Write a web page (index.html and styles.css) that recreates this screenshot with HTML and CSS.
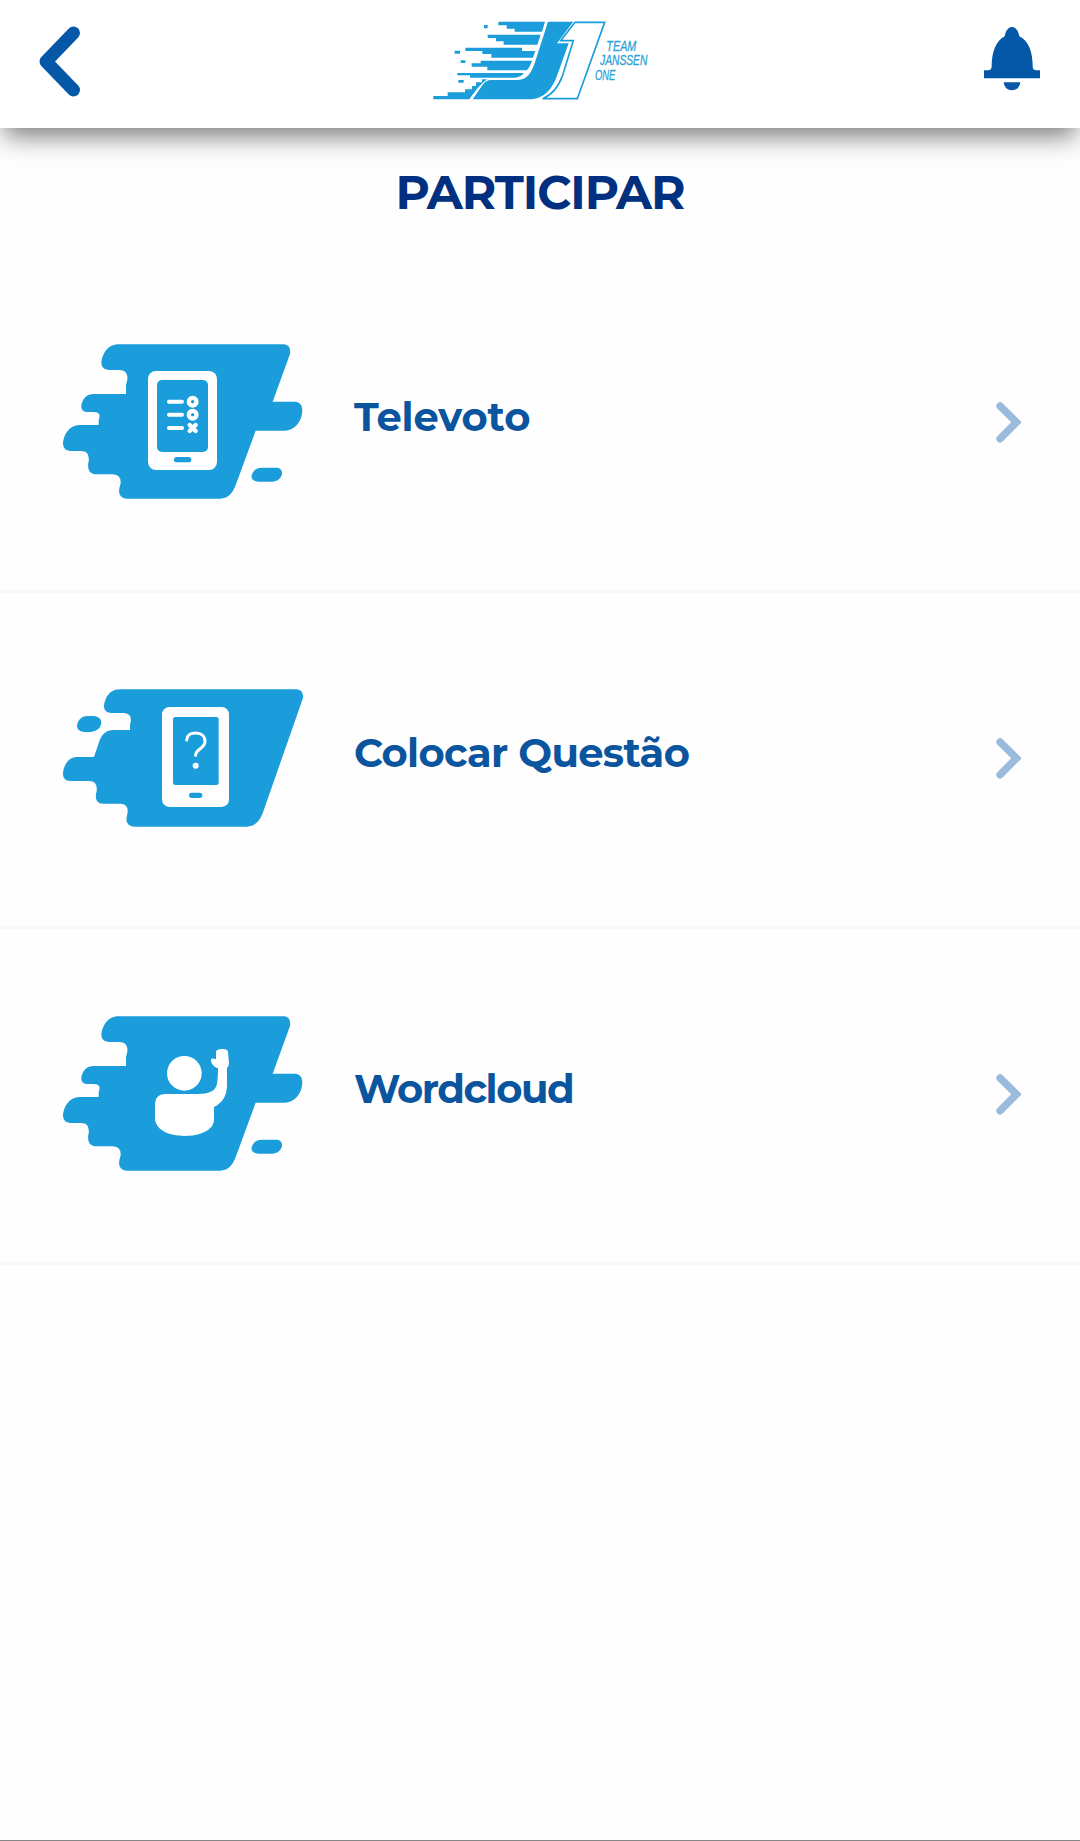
FILE: index.html
```html
<!DOCTYPE html>
<html lang="pt">
<head>
    <meta charset="UTF-8">
    <meta name="viewport" content="width=device-width, initial-scale=1.0">
    <title>Participar</title>
    <link rel="stylesheet" href="styles.css">
</head>
<body>
    <svg class="defs" aria-hidden="true">
        <symbol id="splash" viewBox="0 0 810 540">
            <path d="M205 43 H702 Q724 45 720 72 L668 215 H738 Q758 219 757 244 C755 276 733 302 705 302 H617 L557 466 C547 492 532 506 510 506 H232 C212 506 205 493 208 475 L212 460 Q214 434 186 433 H137 C117 432 111 416 116 394 Q120 363 93 363 H62 C42 362 35 346 41 327 C48 302 65 285 90 285 H146 V269 Q156 246 130 246 H111 C95 245 91 232 96 218 C102 201 113 192 132 192 H228 V164 C238 137 230 120 208 120 H178 C155 119 150 102 157 82 C166 58 181 43 205 43 Z"/>
            <path d="M635 413 H680 Q697 415 696 431 C693 447 679 455 662 455 H625 Q602 453 605 436 C609 422 619 413 635 413 Z"/>
        </symbol>
        <symbol id="chevron" viewBox="0 0 25 41">
            <path d="M4 4 L20.5 20.2 L4 36.8" fill="none" stroke="currentColor" stroke-width="7.4" stroke-linecap="round"/>
        </symbol>
    </svg>

    <header class="topbar">
        <a class="back" href="#" aria-label="Voltar">
            <svg width="42" height="72" viewBox="0 0 42 72">
                <path d="M34.5 7 L7 35.5 L34.5 64" />
            </svg>
        </a>
        <svg class="logo" width="240" height="120" viewBox="0 0 720 360">
            <path d="M235 65 H375 L366 95 H284 V86 H260 V76 H235 Z"/>
            <path d="M203 104 H362 L352 134 H251 V124 H228 V114 H203 Z"/>
            <path d="M136 143 H306 V153 H346 L339 173 H214 V162 H187 V153 H136 Z"/>
            <path d="M182 182 H336 C332 195 327 204 320 211 H202 V200 H155 V190 H182 Z"/>
            <path d="M112 219 H312 C304 229 294 233 280 233 H150 V226 H112 Z"/>
            <path d="M186 238 H202 C184 249 171 267 148 298 H40 V288 H83 V277 H135 V268 H156 V258 H168 V247 H186 Z"/>
            <path d="M192 75h11v10h-11z M104 152h16v9h-16z M122 181h14v8h-14z M115 240h16v8h-16z"/>
            <path d="M384 65 H460 L411 130 H446 L414 219 C399 264 375 298 326 298 H158 L186 257 Q195 240 215 240 H294 C322 239 334 218 344 190 Z"/>
            <path class="outline" d="M465 67 H554 L472 296 H368 C398 284 416 260 428 226 L460 122 H422 Z"/>
            <g class="logo-text">
                <text x="559" y="152" textLength="90" lengthAdjust="spacingAndGlyphs">TEAM</text>
                <text x="540" y="196" textLength="142" lengthAdjust="spacingAndGlyphs">JANSSEN</text>
                <text x="525" y="241" textLength="61" lengthAdjust="spacingAndGlyphs">ONE</text>
            </g>
        </svg>
        <a class="bell" href="#" aria-label="Notificações">
            <svg width="56" height="64" viewBox="0 0 168 192">
                <path d="M62 28 C66 8 74 0 84 0 C94 0 102 8 106 28 C134 40 146 77 146 118 Q146 130 157 130 H168 V154 H0 V130 H12 Q23 130 23 118 C23 77 36 40 62 28 Z"/>
                <path d="M59 166 H109 C107 181 98 190 84 190 C70 190 61 181 59 166 Z"/>
            </svg>
        </a>
    </header>

    <main>
        <h1>PARTICIPAR</h1>
        <nav class="menu">
            <a class="item" href="#">
                <svg class="picture" viewBox="0 0 810 561">
                    <use href="#splash" width="810" height="540"/>
                    <rect class="white" x="294" y="123" width="207" height="297" rx="24"/>
                    <rect x="321" y="150" width="153" height="216" rx="15"/>
                    <rect x="372" y="381" width="52" height="16" rx="8"/>
                    <path class="line" stroke-width="12" d="M357 215 H396 M357 254 H396 M357 294 H396"/>
                    <g class="line" stroke-width="13">
                        <circle cx="428" cy="215" r="11.5"/>
                        <circle cx="428" cy="254" r="11.5"/>
                        <path d="M419 285 L437 303 M437 285 L419 303"/>
                    </g>
                </svg>
                <span class="label televoto">Televoto</span>
                <svg class="arrow"><use href="#chevron"/></svg>
            </a>
            <a class="item" href="#">
                <svg class="picture" viewBox="0 -27 810 561">
                    <path d="M210 43 H740 Q762 46 759 69 L638 415 C628 440 613 455 590 455 H254 C232 454 226 439 231 422 Q240 387 211 386 H160 C138 385 134 369 140 349 Q143 318 118 318 H62 C39 317 36 301 41 282 C48 260 61 246 83 246 H132 L149 196 C157 176 170 165 190 165 H240 V150 Q250 114 220 114 H182 C163 112 159 98 164 81 C171 57 186 43 210 43 Z"/>
                    <path d="M112 123 H133 Q155 127 154 144 C151 162 138 170 119 171 H101 Q80 168 81 151 C84 134 95 124 112 123 Z"/>
                    <rect class="white" x="336" y="96" width="201" height="300" rx="22"/>
                    <rect x="369" y="126" width="137" height="204" rx="7"/>
                    <rect x="417" y="353" width="40" height="16" rx="8"/>
                    <path class="line" stroke-width="9" d="M410 195 C412 177 423 174 438 174 C454 174 465 184 465 199 C465 222 437 220 437 241"/>
                    <circle class="white" cx="437" cy="272" r="9"/>
                </svg>
                <span class="label questao">Colocar Questão</span>
                <svg class="arrow"><use href="#chevron"/></svg>
            </a>
            <a class="item" href="#">
                <svg class="picture" viewBox="0 0 810 561">
                    <use href="#splash" width="810" height="540"/>
                    <circle class="white" cx="403" cy="214" r="52"/>
                    <path class="white" d="M344 276 H445 C475 276 494 268 500 250 Q504 232 504 199 C493 195 482 185 483 173 Q485 167 498 172 V151 Q498 141 518 141 Q535 142 534 151 L537 184 Q537 193 531 198 V245 C532 279 519 301 492 315 V355 C489 387 448 402 403 402 C358 402 318 385 315 352 V304 Q316 278 344 276 Z"/>
                </svg>
                <span class="label wordcloud">Wordcloud</span>
                <svg class="arrow"><use href="#chevron"/></svg>
            </a>
        </nav>
    </main>
</body>
</html>
```

FILE: styles.css
```css
* {
    box-sizing: border-box;
    margin: 0;
    padding: 0;
}

body {
    display: flex;
    flex-direction: column;
    height: 1841px;
    background: #fefefe;
    border-bottom: 1px solid #858585;
    font-family: Montserrat, Inter, sans-serif;
}

a {
    color: inherit;
    text-decoration: none;
}

svg {
    display: block;
    flex-shrink: 0;
}

.defs {
    width: 0;
    height: 0;
    position: absolute;
}

.topbar {
    display: flex;
    justify-content: space-between;
    height: 128px;
    padding: 0 40px 0 39px;
    background: #fff;
    box-shadow: 0 12px 24px -4px rgba(0, 0, 0, 0.52);
}

.back {
    width: 56px;
    padding-top: 26px;
}

.back path {
    fill: none;
    stroke: #0557a8;
    stroke-width: 13;
    stroke-linecap: round;
    stroke-linejoin: round;
}

.bell {
    padding-top: 27px;
    fill: #0557a8;
}

.logo {
    overflow: visible;
    fill: #1b9ddb;
}

.logo .outline {
    fill: #fff;
    stroke: #1b9ddb;
    stroke-width: 5;
}

.logo-text {
    font-family: "Liberation Sans", sans-serif;
    font-size: 46px;
    font-style: italic;
    fill: #2ba3d9;
    stroke: #2ba3d9;
    stroke-width: 1;
}

h1 {
    height: 129px;
    padding-top: 37px;
    text-align: center;
    font-size: 47px;
    line-height: 56px;
    font-weight: 700;
    letter-spacing: -1px;
    color: #00307f;
}

.item {
    display: flex;
    align-items: center;
    height: 336px;
    padding: 0 59px 0 50px;
    border-bottom: 3px solid #f8f8f8;
    color: #0b559f;
}

.picture {
    width: 270px;
    height: 187px;
    fill: #1b9ddb;
}

.white {
    fill: #fff;
}

.line {
    fill: none;
    stroke: #fff;
    stroke-linecap: round;
}

.label {
    flex: 1;
    padding: 0 0 14px 34px;
    font-size: 40px;
    line-height: 48px;
    font-weight: 700;
    white-space: nowrap;
}

.televoto {
    letter-spacing: -0.1px;
}

.questao {
    letter-spacing: -0.65px;
}

.wordcloud {
    letter-spacing: -1.4px;
}

.arrow {
    width: 25px;
    height: 41px;
    margin-bottom: 3px;
    color: #9bbbdc;
}
```
